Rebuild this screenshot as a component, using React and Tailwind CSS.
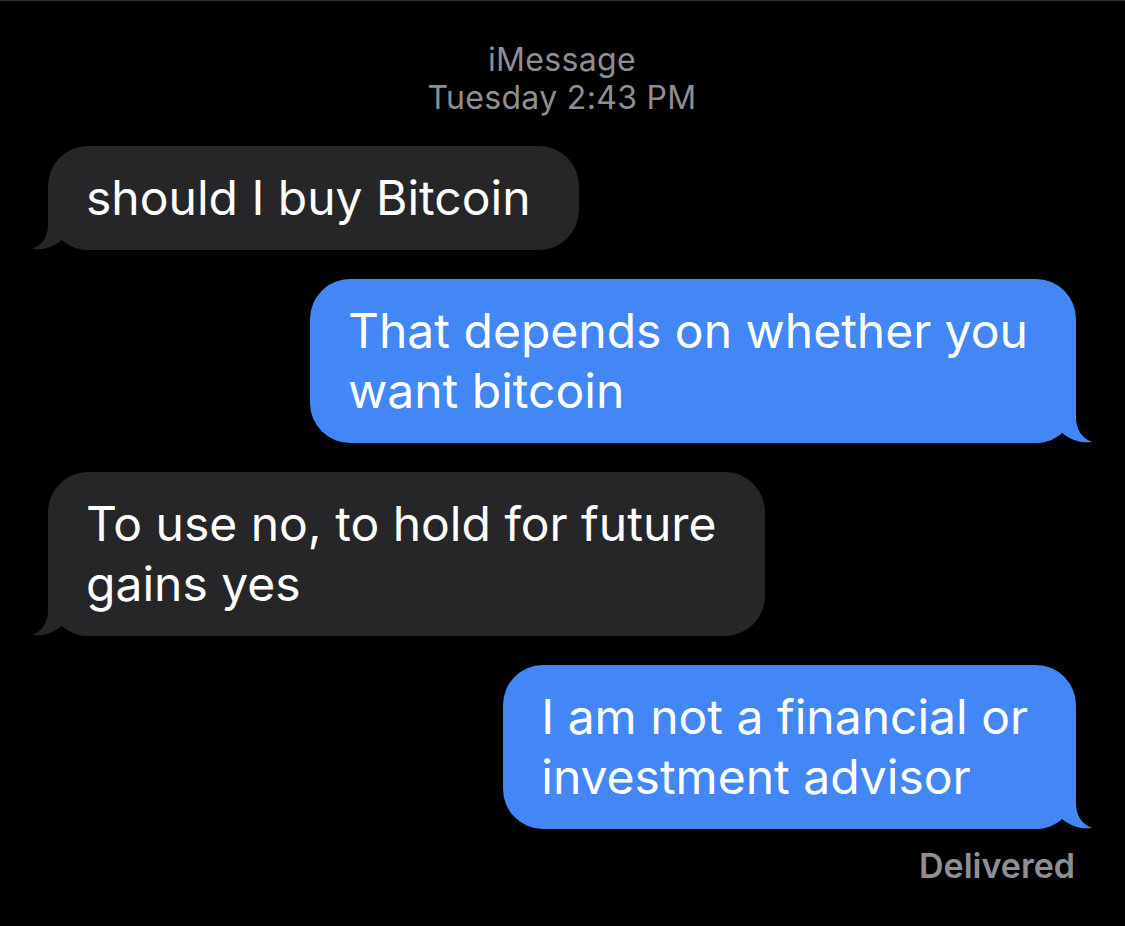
import React from "react";

// iMessage-style conversation, dark mode
const messages = [
  { from: "them", lines: ["should I buy Bitcoin"] },
  { from: "me", lines: ["That depends on whether you", "want bitcoin"] },
  { from: "them", lines: ["To use no, to hold for future", "gains yes"] },
  { from: "me", lines: ["I am not a financial or", "investment advisor"] },
];

function Tail({ side, color }) {
  // bubble edge sits at x=16, bubble bottom at y=44
  return (
    <svg
      width="56"
      height="44"
      viewBox="0 0 56 44"
      className={
        side === "left"
          ? "absolute -left-[16px] bottom-0"
          : "absolute -right-[16px] bottom-0 -scale-x-100"
      }
    >
      <path
        d="M16 0 L16 18 C16 31 10 39 0 43 C11 44.5 22 41 31 33 C37 40 45 44 56 44 L56 0 Z"
        fill={color}
      />
    </svg>
  );
}

function Bubble({ from, lines }) {
  const mine = from === "me";
  const color = mine ? "#4287f5" : "#262628";
  return (
    <div className={mine ? "flex justify-end" : "flex justify-start"}>
      <div
        className={
          "relative rounded-[40px] py-[22px] pl-[38px] pr-[48px] text-[48px] leading-[60px] text-white " +
          (mine ? "bg-[#4287f5]" : "bg-[#262628]")
        }
      >
        <Tail side={mine ? "right" : "left"} color={color} />
        <p className="relative whitespace-nowrap">
          {lines.map((l, i) => (
            <React.Fragment key={i}>
              {l}
              {i < lines.length - 1 && <br />}
            </React.Fragment>
          ))}
        </p>
      </div>
    </div>
  );
}

export default function App() {
  return (
    <div
      className="min-h-screen bg-black border-t border-[#2e2e2e] pl-[48px] pr-[49px]"
      style={{ fontFamily: "Inter, 'Noto Sans', sans-serif" }}
    >
      {/* header */}
      <div className="pt-[40px] text-center text-[32px] leading-[38px] text-[#8e8e93] tracking-[0.01em]">
        <div>iMessage</div>
        <div>Tuesday 2:43 PM</div>
      </div>

      {/* thread */}
      <div className="mt-[29px] flex flex-col gap-[29px]">
        {messages.map((m, i) => (
          <Bubble key={i} {...m} />
        ))}
      </div>

      <div className="mt-[16px] text-right pr-[1px] text-[34px] leading-[42px] font-semibold text-[#8e8e93]">
        Delivered
      </div>
    </div>
  );
}
